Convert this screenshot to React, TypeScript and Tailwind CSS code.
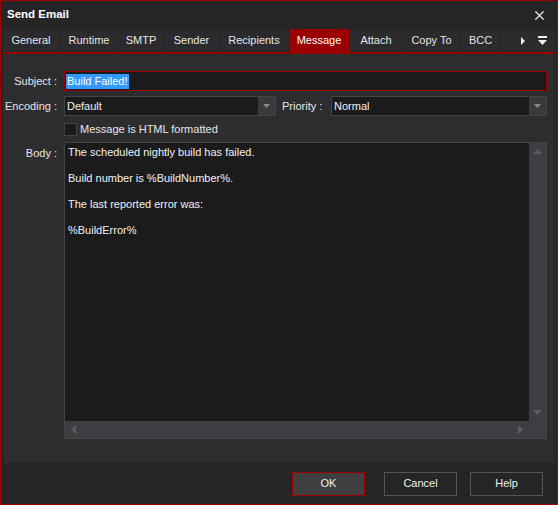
import { X } from 'lucide-react';

const tabs = [
  { name: 'General', w: 57 },
  { name: 'Runtime', w: 59 },
  { name: 'SMTP', w: 45 },
  { name: 'Sender', w: 56 },
  { name: 'Recipients', w: 69 },
  { name: 'Message', w: 61 },
  { name: 'Attach', w: 53 },
  { name: 'Copy To', w: 58 },
  { name: 'BCC', w: 40 },
];

function Caret() {
  return (
    <svg width="7" height="4" viewBox="0 0 7 4">
      <path d="M0 0h7L3.5 4z" fill="#8a8a8a" />
    </svg>
  );
}

function Select({ value, width }: { value: string; width: string }) {
  return (
    <div className={`flex h-[20px] border border-[#434346] bg-[#1b1b1c] ${width}`}>
      <div className="flex-1 px-[2px] leading-[18px] text-[#f1f1f1]">{value}</div>
      <div className="flex w-[17px] items-center justify-center bg-[#3a3a3e]">
        <Caret />
      </div>
    </div>
  );
}

export default function App() {
  return (
    <div
      className="flex h-[505px] w-[558px] flex-col border border-[#9a0000] bg-[#252526] text-[11px] text-[#f1f1f1]"
      style={{ fontFamily: '"Liberation Sans", Arial, sans-serif' }}
    >
      {/* title bar */}
      <div className="flex h-[28px] items-center justify-between pl-[6px] pr-[10px]">
        <span className="text-[11.5px] font-bold text-white">Send Email</span>
        <X size={15} strokeWidth={2} className="text-[#e8e8e8]" />
      </div>

      {/* tabs */}
      <div className="mx-[2px] flex h-[23px] items-stretch bg-[#2b2b2e]">
        {tabs.map((t) => (
          <div
            key={t.name}
            style={{ width: t.w }}
            className={`flex items-center justify-center border-r border-[#252526] ${
              t.name === 'Message' ? 'bg-[#9a0000] text-white' : 'text-[#e6e6e6]'
            }`}
          >
            {t.name}
          </div>
        ))}
        <div className="flex flex-1 items-center justify-end gap-[13px] pr-[8px]">
          <svg width="4" height="8" viewBox="0 0 4 8">
            <path d="M0 0l4 4-4 4z" fill="#f0f0f0" />
          </svg>
          <svg width="9" height="9" viewBox="0 0 9 9">
            <path d="M0 0h9v2H0zM0 4h9L4.5 9z" fill="#f0f0f0" />
          </svg>
        </div>
      </div>
      <div className="mx-[2px] h-[2px] bg-[#9a0000]" />

      {/* content */}
      <div className="mx-[2px] flex flex-1 flex-col gap-[5px] bg-[#2d2d30] pr-[8px] pt-[17px]">
        <div className="flex items-center">
          <div className="w-[54px] whitespace-nowrap text-right text-[#e6e6e6]">Subject :</div>
          <div className="ml-[7px] flex h-[20px] flex-1 items-center border border-[#9a0000] bg-[#1b1b1c] px-[1px]">
            <span className="bg-[#3399ff] px-[1px] leading-[15px] text-white">Build Failed!</span>
          </div>
        </div>
        <div className="flex items-center">
          <div className="w-[54px] whitespace-nowrap text-right text-[#e6e6e6]">Encoding :</div>
          <div className="ml-[7px]">
            <Select value="Default" width="w-[212px]" />
          </div>
          <div className="ml-[6px] w-[49px] whitespace-nowrap text-[#e6e6e6]">Priority :</div>
          <div className="flex-1">
            <Select value="Normal" width="w-full" />
          </div>
        </div>
        <div className="ml-[61px] flex h-[16px] items-center gap-[3px]">
          <div className="h-[13px] w-[13px] border border-[#434346] bg-[#1b1b1c]" />
          <span className="text-[#e6e6e6]">Message is HTML formatted</span>
        </div>
        <div className="flex">
          <div className="w-[54px] pt-[3px] text-right text-[#e6e6e6]">Body :</div>
          <div className="ml-[7px] flex h-[297px] flex-1 flex-col border border-[#434346] bg-[#1b1b1c]">
            <div className="flex flex-1">
              <div className="flex-1 px-[3px] pt-[3px] leading-[13px] text-[#f1f1f1]">
                <p>The scheduled nightly build has failed.</p>
                <p className="mt-[13px]">Build number is %BuildNumber%.</p>
                <p className="mt-[13px]">The last reported error was:</p>
                <p className="mt-[13px]">%BuildError%</p>
              </div>
              <div className="flex w-[17px] flex-col items-center justify-between bg-[#3e3e42] py-[6px]">
                <svg width="9" height="5" viewBox="0 0 9 5">
                  <path d="M0 5h9L4.5 0z" fill="#5c5c60" />
                </svg>
                <svg width="9" height="5" viewBox="0 0 9 5">
                  <path d="M0 0h9L4.5 5z" fill="#5c5c60" />
                </svg>
              </div>
            </div>
            <div className="flex h-[17px]">
              <div className="flex flex-1 items-center justify-between bg-[#3e3e42] px-[6px]">
                <svg width="5" height="9" viewBox="0 0 5 9">
                  <path d="M5 0v9L0 4.5z" fill="#5c5c60" />
                </svg>
                <svg width="5" height="9" viewBox="0 0 5 9">
                  <path d="M0 0v9l5-4.5z" fill="#5c5c60" />
                </svg>
              </div>
              <div className="w-[17px] bg-[#3e3e42]" />
            </div>
          </div>
        </div>
      </div>

      {/* footer */}
      <div className="flex h-[41px] items-center justify-end gap-[19px] pr-[14px]">
        <button className="h-[24px] w-[73px] border border-[#9a0000] bg-[#3e3e40] text-[#f1f1f1]">OK</button>
        <div className="flex gap-[13px]">
          <button className="h-[24px] w-[73px] border border-[#555558] bg-[#252526] text-[#f1f1f1]">Cancel</button>
          <button className="h-[24px] w-[73px] border border-[#555558] bg-[#252526] text-[#f1f1f1]">Help</button>
        </div>
      </div>
    </div>
  );
}
